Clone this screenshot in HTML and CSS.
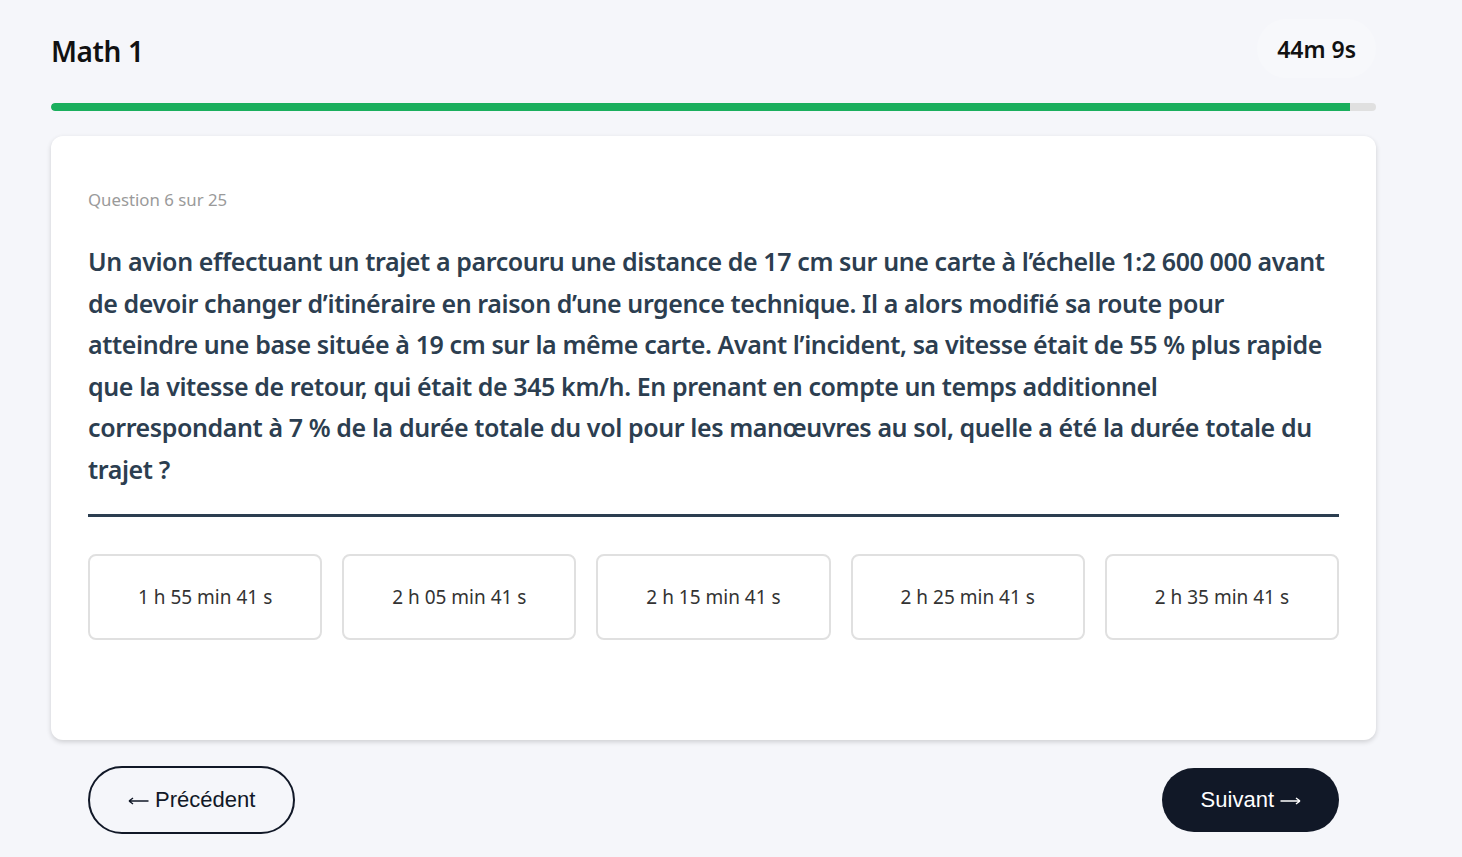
FILE: index.html
```html
<!DOCTYPE html>
<html lang="fr">
<head>
<meta charset="utf-8">
<title>Math 1</title>
<link rel="stylesheet" href="styles.css">
</head>
<body>
<div class="page">
  <header class="header">
    <h1 class="title">Math 1</h1>
    <div class="timer">44m 9s</div>
  </header>
  <div class="progress"><div class="progress-fill" style="width: 98%"></div></div>
  <main class="card">
    <div class="q-label">Question 6 sur 25</div>
    <p class="q-text">Un avion effectuant un trajet a parcouru une distance de 17 cm sur une carte à l’échelle 1:2 600 000 avant de devoir changer d’itinéraire en raison d’une urgence technique. Il a alors modifié sa route pour atteindre une base située à 19 cm sur la même carte. Avant l’incident, sa vitesse était de 55 % plus rapide que la vitesse de retour, qui était de 345 km/h. En prenant en compte un temps additionnel correspondant à 7 % de la durée totale du vol pour les manœuvres au sol, quelle a été la durée totale du trajet ?</p>
    <div class="options">
      <button class="option">1 h 55 min 41 s</button>
      <button class="option">2 h 05 min 41 s</button>
      <button class="option">2 h 15 min 41 s</button>
      <button class="option">2 h 25 min 41 s</button>
      <button class="option">2 h 35 min 41 s</button>
    </div>
  </main>
  <nav class="nav">
    <button class="btn btn-outline"><svg class="arrow" viewBox="0 0 21 10" width="21" height="10"><path d="M1 5H20.5M1 5L5 2M1 5L5 8" fill="none" stroke="currentColor" stroke-width="1.4"/></svg>Précédent</button>
    <button class="btn btn-dark">Suivant<svg class="arrow arrow-right" viewBox="0 0 21 10" width="21" height="10"><path d="M0.5 5H20M20 5L16 2M20 5L16 8" fill="none" stroke="currentColor" stroke-width="1.4"/></svg></button>
  </nav>
</div>
</body>
</html>
```

FILE: styles.css
```css
* { box-sizing: border-box; }
html, body { margin: 0; padding: 0; }
body {
  background: #f5f6fa;
  font-family: "Noto Sans", "Open Sans", sans-serif;
  color: #111;
}
.page {
  width: 1325px;
  margin-left: 51px;
  padding-top: 19px;
}
.header {
  display: flex;
  justify-content: space-between;
  align-items: center;
  height: 59px;
}
.title {
  margin: 0;
  font-size: 28px;
  letter-spacing: -0.4px;
  font-weight: 600;
  color: #111;
  line-height: 34px;
  padding-top: 4px;
}
.timer {
  background: #f7f8fb;
  border-radius: 30px;
  height: 59px;
  padding: 0 20px;
  display: flex;
  align-items: center;
  font-size: 23px;
  font-weight: 600;
  color: #111;
}
.progress {
  margin-top: 25px;
  height: 8px;
  background: #e0e0e0;
  border-radius: 4px;
  overflow: hidden;
}
.progress-fill {
  height: 100%;
  background: #1aaf5d;
  border-radius: 4px 0 0 4px;
}
.card {
  margin-top: 25px;
  background: #fff;
  border-radius: 12px;
  box-shadow: 0 2px 5px rgba(0,0,0,0.16);
  padding: 52px 37px 100px;
}
.q-label {
  font-size: 16.8px;
  line-height: 24px;
  color: #9a9a9a;
}
.q-text {
  margin: 29px 0 0;
  font-size: 25px;
  letter-spacing: -0.4px;
  line-height: 41.6px;
  font-weight: 600;
  color: #2c3e50;
  padding: 0 8px 23px 0;
  border-bottom: 3px solid #2c3e50;
}
.options {
  margin-top: 37px;
  display: grid;
  grid-template-columns: repeat(5, 1fr);
  gap: 20px;
}
.option {
  height: 86px;
  background: #fff;
  border: 2px solid #e0e0e0;
  border-radius: 8px;
  font-family: "Noto Sans", "Open Sans", sans-serif;
  font-size: 19px;
  color: #333;
  cursor: pointer;
}
.nav {
  display: flex;
  justify-content: space-between;
  align-items: center;
  padding: 26px 37px 0;
}
.btn {
  display: inline-flex;
  align-items: center;
  font-family: "Liberation Sans", Arial, sans-serif;
  font-size: 22px;
  line-height: 24px;
  border-radius: 40px;
  cursor: pointer;
}
.arrow {
  margin-right: 6px;
  margin-top: 2px;
}
.arrow-right {
  margin-right: 0;
  margin-left: 6px;
}
.btn-outline {
  background: transparent;
  border: 2px solid #111827;
  color: #111827;
  padding: 20px 38px 20px 38px;
}
.btn-dark {
  background: #111827;
  border: none;
  color: #fff;
  padding: 20px 38px 20px 39px;
}
```
